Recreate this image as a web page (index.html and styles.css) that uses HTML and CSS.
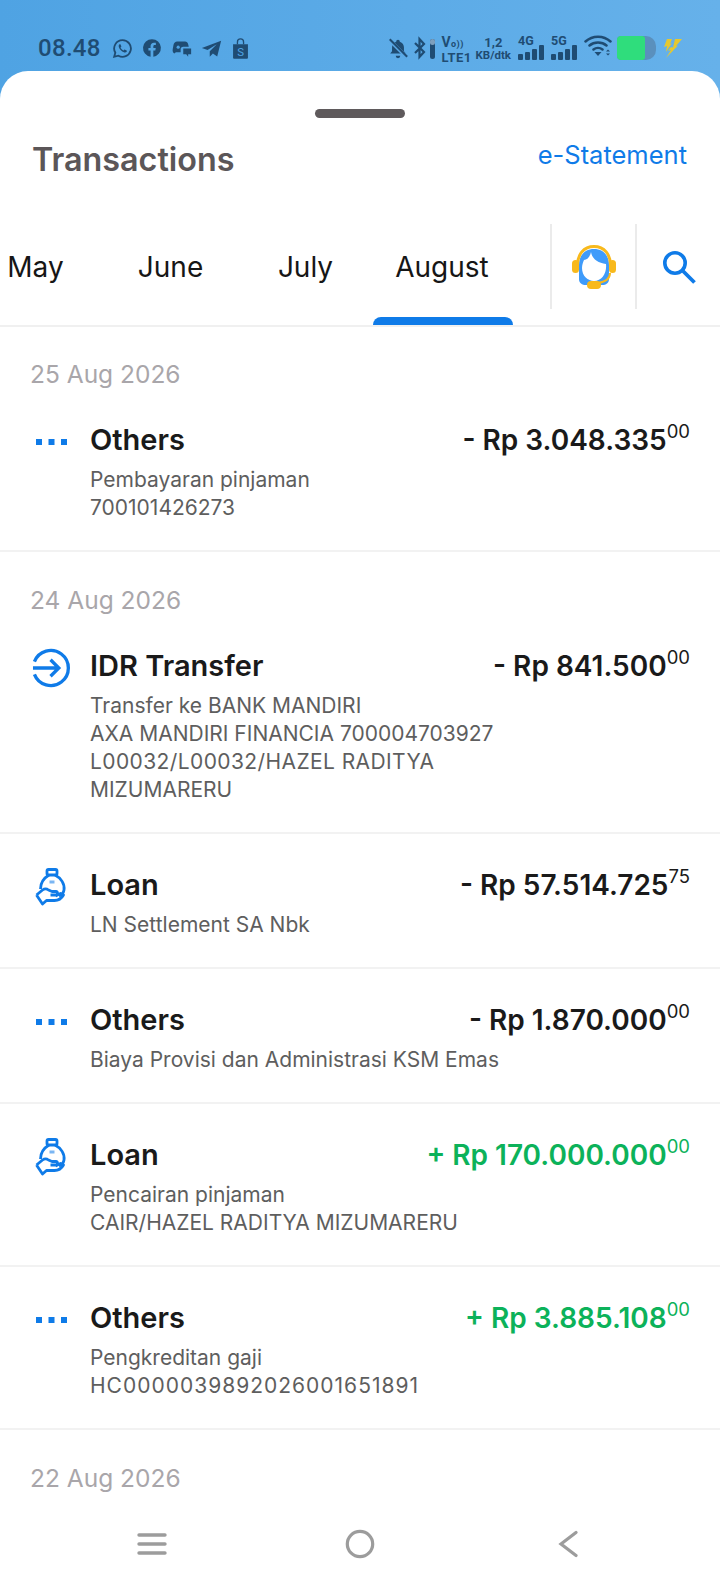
FILE: index.html
```html
<!DOCTYPE html>
<html lang="en">
<head>
  <meta charset="UTF-8" />
  <meta name="viewport" content="width=device-width, initial-scale=1.0" />
  <title>Transactions</title>
  <link rel="stylesheet" href="styles.css">
</head>
<body>

  <!-- Status bar -->
  <div class="status">
    <div class="status-left">
      <span class="time">08.48</span>
      <svg class="st-icon" width="21" height="21" viewBox="0 0 24 24"><path d="M12 2.500a9.500 9.500 0 0 0-8.200 14.300L2.500 21.500l4.800-1.300A9.500 9.500 0 1 0 12 2.500z" fill="none" stroke="#1f4c73" stroke-width="2.100"/><path d="M8.600 7.200c-.9.800-1.200 2-.7 3.400 1 2.700 3 4.800 5.700 5.800 1.500.5 2.700 0 3.300-1 .3-.6.2-1-.2-1.200l-1.800-.9c-.4-.2-.7-.1-.9.200l-.7.900c-1.600-.6-2.900-1.900-3.600-3.500l.7-.7c.3-.3.3-.6.2-.9l-.8-1.800c-.2-.5-.6-.6-1.200-.3z" fill="#1f4c73"/></svg>
      <svg class="st-icon" width="20" height="20" viewBox="0 0 24 24"><path d="M12 1.500a10.500 10.500 0 0 0-1.700 20.900v-7.300H7.700V12h2.600V9.700c0-2.600 1.600-4.100 4-4.100 1.100 0 2.300.2 2.300.2v2.600h-1.300c-1.300 0-1.700.8-1.700 1.600V12h2.900l-.5 3.100h-2.400v7.300A10.500 10.500 0 0 0 12 1.500z" fill="#1f4c73"/></svg>
      <svg class="st-icon" width="21" height="21" viewBox="0 0 24 24"><path d="M7 4h9c2 0 3 1 3.600 3l.7 3H14a3 3 0 0 0-3 3v3.200H5.600L3.800 17.800C2.200 16.800 1.500 15 2 12.500l.9-4.700C3.300 5.500 5 4 7 4z" fill="#1f4c73"/><circle cx="8.200" cy="10.500" r="1.800" fill="#4fa3e3"/><path d="M14 12h9v6.500h-3.400v3l-2.200-3H14z" fill="#1f4c73"/></svg>
      <svg class="st-icon" width="21" height="21" viewBox="0 0 24 24"><path d="M23 3 1 11.500l6.500 2.300L18 7l-8 8v6.500l3.600-3.700 4.900 3.400z" fill="#1f4c73"/></svg>
      <svg class="st-icon" width="19" height="21" viewBox="0 0 20 24"><path d="M1.500 7h17v15.500a1.200 1.200 0 0 1-1.200 1.200H2.700a1.200 1.200 0 0 1-1.200-1.200z" fill="#1f4c73"/><path d="M6.500 7V4.500a3.500 3.500 0 0 1 7 0V7" fill="none" stroke="#1f4c73" stroke-width="1.500"/><text x="10" y="20" text-anchor="middle" class="shop-s">S</text></svg>
    </div>
    <div class="status-right">
      <svg class="bell" width="22" height="23" viewBox="0 0 24 24"><path d="M12 2.500a2 2 0 0 1 2 2c3 .9 4.500 3.400 4.500 6.500v4l2 2.500H3.500l2-2.500v-4c0-3.100 1.500-5.600 4.500-6.500a2 2 0 0 1 2-2zM9.500 20h5a2.500 2.500 0 0 1-5 0z" fill="#1f4c73"/><path d="M2.500 2.500 21.500 21.500" stroke="#5aa8e6" stroke-width="4"/><path d="M3 2 22 21" stroke="#1f4c73" stroke-width="2.200"/></svg>
      <svg class="bt" width="22" height="24" viewBox="0 0 22 24"><path d="M1 7l9 9-4.500 5V3L10 8l-9 9" fill="none" stroke="#1f4c73" stroke-width="2.200"/><rect x="16" y="3" width="5" height="20" rx="2.500" fill="#1f4c73"/><rect x="16" y="3" width="5" height="6" rx="2.500" fill="#7d9fbd"/></svg>
      <div class="mini volte"><span>V<small>o))</small></span><span>LTE1</span></div>
      <div class="mini speed"><span>1,2</span><span>KB/dtk</span></div>
      <div class="signal">
        <span>4G</span>
        <svg width="26" height="15" viewBox="0 0 26 15"><rect y="9" width="5" height="6" rx="1"/><rect x="7" y="7" width="5" height="8" rx="1"/><rect x="14" y="4" width="5" height="11" rx="1"/><rect x="21" y="0" width="5" height="15" rx="1"/></svg>
      </div>
      <div class="signal">
        <span>5G</span>
        <svg width="26" height="15" viewBox="0 0 26 15"><rect y="9" width="5" height="6" rx="1"/><rect x="7" y="7" width="5" height="8" rx="1"/><rect x="14" y="4" width="5" height="11" rx="1"/><rect x="21" y="0" width="5" height="15" rx="1"/></svg>
      </div>
      <svg width="28" height="24" viewBox="0 0 28 24"><path d="M1.500 8.500c7-6.500 18-6.500 25 0M5.500 12.500c4.700-4 12.300-4 17 0M9.500 16.500c2.600-2 6.400-2 9 0" fill="none" stroke="#1f4c73" stroke-width="2.500" stroke-linecap="round"/><path d="M10.500 19h7l-3.500 4z" fill="#1f4c73"/><path d="M22 18.500l2-2 2 2zM22 20.500l2 2 2-2z" fill="#1f4c73"/></svg>
      <div class="battery"><div class="battery-fill"></div></div>
      <svg class="bolt" width="20" height="20" viewBox="0 0 20 20"><path d="M4 1h5L7 6l2-1-6 9 1-6-3 1zM12 1h7l-6 7 2-.5L3 20l5-8-3 1 3-4 2 .5z" fill="#e6c82f"/></svg>
    </div>
  </div>

  <div class="sheet">
    <div class="handle"></div>

    <header class="head">
      <h1>Transactions</h1>
      <a class="statement">e-Statement</a>
    </header>

    <nav class="tabs">
      <div class="months">
        <a class="tab">May</a>
        <a class="tab">June</a>
        <a class="tab">July</a>
        <a class="tab active">August</a>
      </div>
      <div class="tool">
        <svg width="48" height="48" viewBox="0 0 48 48">
          <path d="M9 22C9 12 15 6 24 6s15 6 15 16v14c0 4-3 6-7 6H16c-4 0-7-2-7-6z" fill="#3f9bfa"/>
          <path d="M21 9c1 7 7 11 15 12 1 9-4 17-12 17-6 0-12-5-12-13 0-3 1-6 2-8 3 0 6-3 7-8z" fill="#fff"/>
          <path d="M7.500 24C7 11 14 3.500 24 3.500S41 11 40.500 24" fill="none" stroke="#f8b91c" stroke-width="3"/>
          <rect x="2" y="17" width="7" height="13" rx="3.500" fill="#f8b91c"/>
          <rect x="39" y="17" width="7" height="13" rx="3.500" fill="#f8b91c"/>
          <path d="M40 30c0 6-5 9-12 10" fill="none" stroke="#f8b91c" stroke-width="2"/>
          <rect x="17" y="38" width="14" height="8" rx="4" fill="#f8b91c"/>
        </svg>
      </div>
      <div class="tool">
        <svg width="36" height="36" viewBox="0 0 36 36"><circle cx="14" cy="14" r="10.200" fill="none" stroke="#0f7be8" stroke-width="3.600"/><path d="M21.500 21.500 33.500 33.500" stroke="#0f7be8" stroke-width="3.800"/></svg>
      </div>
    </nav>

    <main class="list">
      <section>
        <div class="date">25 Aug 2026</div>
        <div class="row">
          <div class="row-icon">
            <svg width="33" height="8" viewBox="0 0 33 8"><rect x="1" y="1" width="6" height="6" fill="#0f7be8"/><rect x="13.500" y="1" width="6" height="6" fill="#0f7be8"/><rect x="26" y="1" width="6" height="6" fill="#0f7be8"/></svg>
          </div>
          <div class="row-body">
            <div class="row-top">
              <span class="title">Others</span>
              <span class="amount">- Rp 3.048.335<sup>00</sup></span>
            </div>
            <p class="desc">Pembayaran pinjaman<br>700101426273</p>
          </div>
        </div>
      </section>

      <section>
        <div class="date">24 Aug 2026</div>
        <div class="row">
          <div class="row-icon">
            <svg width="40" height="40" viewBox="0 0 40 40"><path d="M2.500 13.500A18 18 0 1 1 2.500 26.500" fill="none" stroke="#0f7be8" stroke-width="3.400"/><path d="M1 20h26M19 11.500l8.500 8.500-8.500 8.500" fill="none" stroke="#0f7be8" stroke-width="3.400"/></svg>
          </div>
          <div class="row-body">
            <div class="row-top">
              <span class="title">IDR Transfer</span>
              <span class="amount">- Rp 841.500<sup>00</sup></span>
            </div>
            <p class="desc">Transfer ke BANK MANDIRI<br>AXA MANDIRI FINANCIA 700004703927<br><span class="code">L00032/L00032/HAZEL RADITYA</span><br>MIZUMARERU</p>
          </div>
        </div>
        <div class="row">
          <div class="row-icon">
            <svg width="34" height="38" viewBox="0 0 34 38"><use href="#loan"/></svg>
          </div>
          <div class="row-body">
            <div class="row-top">
              <span class="title">Loan</span>
              <span class="amount">- Rp 57.514.725<sup>75</sup></span>
            </div>
            <p class="desc">LN Settlement SA Nbk</p>
          </div>
        </div>
        <div class="row">
          <div class="row-icon">
            <svg width="33" height="8" viewBox="0 0 33 8"><rect x="1" y="1" width="6" height="6" fill="#0f7be8"/><rect x="13.500" y="1" width="6" height="6" fill="#0f7be8"/><rect x="26" y="1" width="6" height="6" fill="#0f7be8"/></svg>
          </div>
          <div class="row-body">
            <div class="row-top">
              <span class="title">Others</span>
              <span class="amount">- Rp 1.870.000<sup>00</sup></span>
            </div>
            <p class="desc">Biaya Provisi dan Administrasi KSM Emas</p>
          </div>
        </div>
        <div class="row">
          <div class="row-icon">
            <svg width="34" height="38" viewBox="0 0 34 38"><use href="#loan"/></svg>
          </div>
          <div class="row-body">
            <div class="row-top">
              <span class="title">Loan</span>
              <span class="amount plus">+ Rp 170.000.000<sup>00</sup></span>
            </div>
            <p class="desc">Pencairan pinjaman<br>CAIR/HAZEL RADITYA MIZUMARERU</p>
          </div>
        </div>
        <div class="row">
          <div class="row-icon">
            <svg width="33" height="8" viewBox="0 0 33 8"><rect x="1" y="1" width="6" height="6" fill="#0f7be8"/><rect x="13.500" y="1" width="6" height="6" fill="#0f7be8"/><rect x="26" y="1" width="6" height="6" fill="#0f7be8"/></svg>
          </div>
          <div class="row-body">
            <div class="row-top">
              <span class="title">Others</span>
              <span class="amount plus">+ Rp 3.885.108<sup>00</sup></span>
            </div>
            <p class="desc">Pengkreditan gaji<br><span class="code wide">HC0000039892026001651891</span></p>
          </div>
        </div>
      </section>

      <section>
        <div class="date">22 Aug 2026</div>
      </section>
    </main>

    <!-- Android nav buttons -->
    <footer class="navbar">
      <svg width="30" height="24" viewBox="0 0 30 24"><path d="M2 3h26M2 12h26M2 21h26" stroke="#9c9c9c" stroke-width="3.400" stroke-linecap="round"/></svg>
      <svg class="nav-home" width="30" height="30" viewBox="0 0 30 30"><circle cx="15" cy="15" r="12.700" fill="none" stroke="#9c9c9c" stroke-width="3.200"/></svg>
      <svg width="20" height="28" viewBox="0 0 20 28"><path d="M18 2.500 3 14l15 11.500" fill="none" stroke="#9c9c9c" stroke-width="3.200" stroke-linecap="round"/></svg>
    </footer>
  </div>

  <svg class="defs" width="0" height="0">
    <defs>
      <g id="loan" fill="none" stroke="#0f7be8" stroke-width="2.800" stroke-linejoin="round">
        <rect x="12" y="1.500" width="10" height="5.500" rx="1.500"/>
        <path d="M14 7c-5 3-8.500 8-8.500 14M20 7c6 3 10 9 9 15-.5 3-2.500 5-5 6"/>
        <path d="M1.500 27l6-5c2-1.500 4-1.500 6 0l3.500 1.500h4c2 0 2 3-.5 3.500h-5M1.500 27l6 9 4-3.500h8c4 0 7-2 9-5.500l-3-1.500-5 2.500"/>
        <path d="M14.500 14h5" stroke-width="3" stroke="#7bb6f3"/>
      </g>
    </defs>
  </svg>

</body>
</html>
```

FILE: styles.css
```css
* {
  box-sizing: border-box;
}

html,
body {
  margin: 0;
  height: 1584px;
  overflow: hidden;
}

body {
  display: flex;
  flex-direction: column;
  font-family: Inter, "Noto Sans", sans-serif;
  background: linear-gradient(90deg, #4fa3e3, #66b1ea);
}

.defs {
  position: absolute;
}

/* status bar */
.status {
  height: 71px;
  flex: none;
  display: flex;
  justify-content: space-between;
  padding: 33px 37px 0 38px;
  color: #1f4c73;
}

.status-left {
  display: flex;
  align-items: flex-start;
  gap: 9px;
  height: 30px;
}

.time {
  font-size: 24px;
  font-weight: 500;
  line-height: 30px;
  margin-right: 2px;
  letter-spacing: 0.3px;
  font-family: Roboto, sans-serif;
}

.st-icon {
  margin-top: 5px;
}

.shop-s {
  fill: #4fa3e3;
  font-size: 13px;
  font-family: Roboto, sans-serif;
}

.status-right {
  display: flex;
  align-items: flex-start;
  gap: 7px;
  height: 30px;
}

.bell {
  margin-top: 4px;
  margin-right: -2px;
}

.bt {
  margin-top: 3px;
  margin-right: -1px;
}

.mini {
  display: flex;
  flex-direction: column;
  align-items: center;
  font-family: Roboto, sans-serif;
  font-weight: 700;
  font-size: 11.5px;
  line-height: 13px;
  margin-top: 3px;
  white-space: nowrap;
}

.mini small {
  font-size: 9px;
}

.volte {
  align-items: flex-start;
  width: 27px;
}

.volte span {
  font-size: 13px;
  letter-spacing: 0.4px;
}

.volte span:first-child {
  font-size: 14px;
}

.speed span:first-child {
  font-size: 13px;
}

.signal {
  display: flex;
  flex-direction: column;
  font-family: Roboto, sans-serif;
  font-weight: 700;
  font-size: 12.5px;
  line-height: 9px;
  margin-top: 3px;
  fill: #1f4c73;
}

.battery {
  width: 39px;
  height: 24px;
  margin-left: -2px;
  margin-top: 3px;
  border-radius: 4px 10px 10px 4px;
  background: #5a90bd;
  overflow: hidden;
}

.battery-fill {
  width: 28px;
  height: 100%;
  background: #2fdd7c;
  border-radius: 3px;
}

.bolt {
  margin-top: 5px;
}

/* sheet */
.sheet {
  flex: 1;
  min-height: 0;
  display: flex;
  flex-direction: column;
  background: #fff;
  border-radius: 28px 28px 0 0;
}

.handle {
  flex: none;
  width: 90px;
  height: 9px;
  margin: 38px auto 0;
  border-radius: 5px;
  background: #5f5a5c;
}

.head {
  flex: none;
  display: flex;
  justify-content: space-between;
  align-items: flex-start;
  padding: 21px 33px 0 32px;
  height: 106px;
}

.head h1 {
  margin: 0;
  font-size: 32.3px;
  line-height: 42px;
  font-weight: 600;
  color: #5b5658;
}

.statement {
  font-size: 25.5px;
  line-height: 32px;
  color: #0f7be8;
}

.tabs {
  flex: none;
  display: flex;
  height: 103px;
  border-bottom: 2px solid #f0f0f0;
}

.months {
  width: 550px;
  display: flex;
  overflow: hidden;
}

.tab {
  flex: none;
  width: 135px;
  height: 101px;
  padding-top: 23px;
  font-size: 28px;
  line-height: 40px;
  text-align: center;
  color: #161616;
}

.tab:first-child {
  margin-left: -32px;
}

.tab.active {
  position: relative;
  width: 140px;
  padding-right: 2px;
}

.tab.active::after {
  content: "";
  position: absolute;
  left: 0;
  right: 0;
  bottom: 0;
  height: 8px;
  border-radius: 8px 8px 0 0;
  background: #0f7be8;
}

.tool {
  flex: none;
  width: 85px;
  height: 85px;
  display: flex;
  align-items: center;
  justify-content: center;
  border-left: 2px solid #ebebeb;
}

/* transaction list */
.list {
  flex: 1;
  min-height: 0;
  overflow: hidden;
}

.date {
  padding: 34px 30px 0;
  height: 63px;
  font-size: 24.5px;
  line-height: 28px;
  color: #a9a6aa;
}

section:first-child .date {
  padding-top: 33px;
  height: 62px;
}

.row {
  display: flex;
  padding: 34px 30px 28px 0;
  border-bottom: 2px solid #f2f2f2;
}

.row-icon {
  flex: none;
  width: 90px;
  height: 34px;
  padding: 4px 19px 0 32px;
  display: flex;
  align-items: center;
  justify-content: center;
}

.row-body {
  flex: 1;
  min-width: 0;
}

.row-top {
  display: flex;
  justify-content: space-between;
  align-items: flex-start;
  height: 34px;
  margin-bottom: 9px;
}

.title,
.amount {
  font-size: 29px;
  line-height: 34px;
  font-weight: 600;
  color: #1a1a1a;
  white-space: nowrap;
}

.amount {
  font-size: 28px;
}

.amount sup {
  font-size: 18.5px;
  font-weight: 400;
  line-height: 0;
  vertical-align: 12px;
}

.amount.plus {
  color: #0cb25a;
}

.desc {
  margin: 0;
  font-size: 21px;
  line-height: 28px;
  color: #5e5e5e;
}

.code {
  letter-spacing: 0.4px;
}

.code.wide {
  letter-spacing: 1px;
}

.navbar {
  flex: none;
  height: 80px;
  display: flex;
  align-items: center;
  justify-content: space-between;
  padding: 0 142px 0 137px;
  background: #fff;
}

.nav-home {
  margin-right: 5px;
}
```
